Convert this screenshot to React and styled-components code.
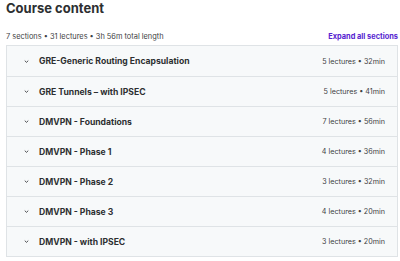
import React from "react";
import styled, { createGlobalStyle } from "styled-components";

const Global = createGlobalStyle`
  html, body { margin: 0; padding: 0; background: #fff; }
  body { font-family: Inter, "Noto Sans", sans-serif; color: #2d2f31; }
`;

const Page = styled.div`
  padding: 0 2px 0 6px;
  width: 400px;
  box-sizing: border-box;
`;

const Title = styled.h2`
  margin: 0;
  font-size: 13px;
  font-weight: 700;
  line-height: 17px;
  color: #2d2f31;
`;

const Meta = styled.div`
  display: flex;
  justify-content: space-between;
  align-items: center;
  margin-top: 13px;
  height: 12px;
  margin-bottom: 3px;
`;

const Summary = styled.span`
  font-size: 7.4px;
  color: #3e4143;
`;

const Expand = styled.button`
  border: 0;
  background: none;
  padding: 0;
  font-family: inherit;
  font-size: 7.4px;
  font-weight: 700;
  color: #5624d0;
  cursor: pointer;
`;

const List = styled.div`
  border: 1px solid #dfe3e6;
  display: flex;
  flex-direction: column;
`;

const Row = styled.div`
  height: 30px;
  display: flex;
  align-items: center;
  padding: 0 12px 0 16px;
  background: #f7f9fa;
  border-top: ${(p) => (p.$first ? "0" : "1px solid #dfe3e6")};
  box-sizing: border-box;
`;

const Chevron = styled.svg`
  width: 7px;
  height: 7px;
  margin-right: 9px;
  flex: none;
`;

const Name = styled.span`
  flex: 1;
  font-size: 8.6px;
  font-weight: 700;
  color: #2d2f31;
`;

const Info = styled.span`
  font-size: 7.2px;
  color: #3e4143;
`;

const sections = [
  ["GRE-Generic Routing Encapsulation", "5 lectures • 32min"],
  ["GRE Tunnels – with IPSEC", "5 lectures • 41min"],
  ["DMVPN - Foundations", "7 lectures • 56min"],
  ["DMVPN - Phase 1", "4 lectures • 36min"],
  ["DMVPN - Phase 2", "3 lectures • 32min"],
  ["DMVPN - Phase 3", "4 lectures • 20min"],
  ["DMVPN - with IPSEC", "3 lectures • 20min"],
];

export default function App() {
  return (
    <>
      <Global />
      <Page>
        <Title>Course content</Title>
        <Meta>
          <Summary>7 sections • 31 lectures • 3h 56m total length</Summary>
          <Expand>Expand all sections</Expand>
        </Meta>
        <List>
          {sections.map(([n, i], k) => (
            <Row key={n} $first={k === 0}>
              <Chevron viewBox="0 0 10 10">
                <path d="M2.5 3.8 L5 6.2 L7.5 3.8" fill="none" stroke="#2d2f31" strokeWidth="1.2" />
              </Chevron>
              <Name>{n}</Name>
              <Info>{i}</Info>
            </Row>
          ))}
        </List>
      </Page>
    </>
  );
}
